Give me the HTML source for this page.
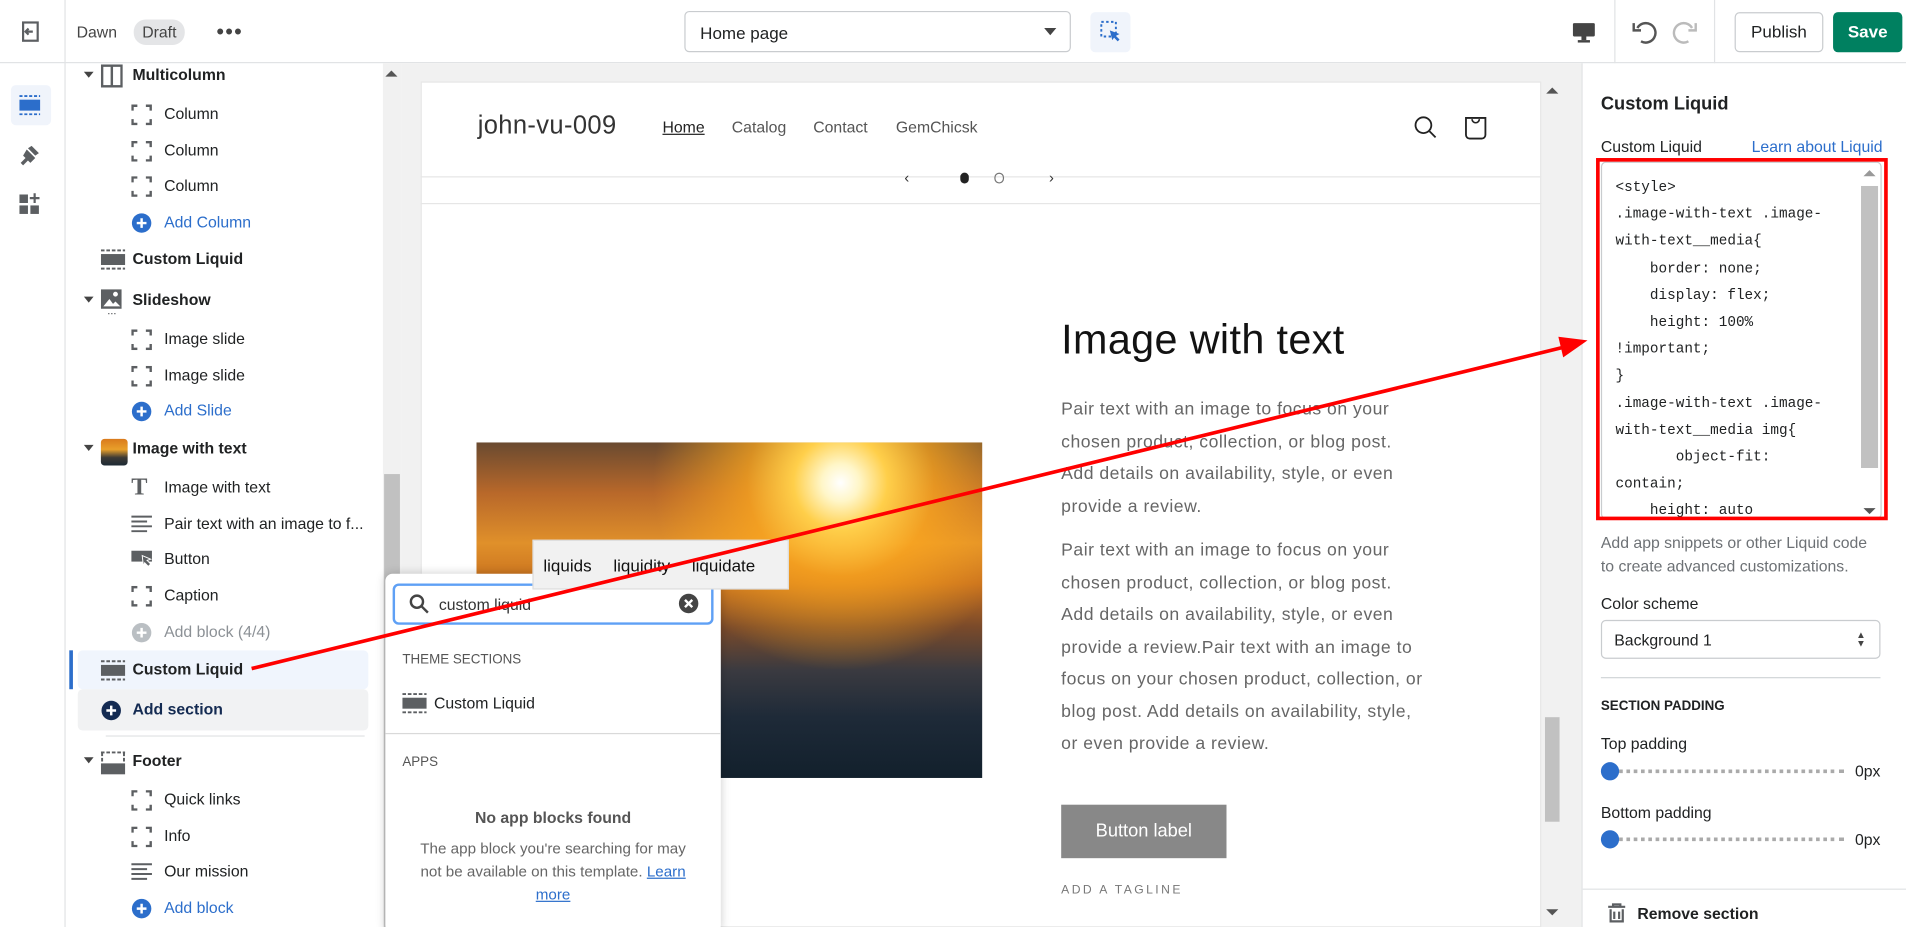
<!DOCTYPE html>
<html><head><meta charset="utf-8"><style>
*{box-sizing:border-box;margin:0;padding:0}
html,body{width:1906px;height:927px;overflow:hidden;background:#fff;font-family:"Liberation Sans",sans-serif;color:#202223}
#w{position:absolute;left:0;top:0;width:1568px;height:763px;transform:scale(1.21556);transform-origin:0 0;overflow:hidden}
.a{position:absolute}
.t{font-size:13px;white-space:nowrap}
.blue{color:#2c6ecb}
</style></head><body><div id="w">
<!-- top bar -->
<div class="a" style="left:0;top:0;width:1568px;height:52px;border-bottom:1px solid #e1e3e5;background:#fff"></div>
<div class="a" style="left:53px;top:0;width:1px;height:763px;background:#e1e3e5"></div>
<svg class="a" style="left:16px;top:17px" width="18" height="18" viewBox="0 0 18 18"><rect x="3" y="1.5" width="12" height="15" fill="none" stroke="#5c5f62" stroke-width="1.8"/><path d="M11 9H5M7.5 6.5L5 9l2.5 2.5" stroke="#5c5f62" stroke-width="1.8" fill="none"/></svg>
<div class="a t" style="left:63px;top:19px;color:#444">Dawn</div>
<div class="a t" style="left:110px;top:16px;background:#e4e5e7;border-radius:10px;padding:3px 7px;color:#444">Draft</div>
<div class="a" style="left:178px;top:16px;font-size:18px;color:#444;letter-spacing:1px">•••</div>
<div class="a" style="left:563px;top:9px;width:318px;height:34px;border:1px solid #c9cccf;border-radius:4px"></div>
<div class="a t" style="left:576px;top:19px;font-size:14px">Home page</div>
<div class="a" style="left:859px;top:23px;border:5px solid transparent;border-top:6px solid #444"></div>
<div class="a" style="left:897px;top:10px;width:33px;height:33px;background:#f0f4fb;border-radius:4px"></div>
<svg class="a" style="left:904px;top:16px" width="20" height="20" viewBox="0 0 20 20"><rect x="2" y="2" width="12" height="12" fill="none" stroke="#2c6ecb" stroke-width="1.6" stroke-dasharray="2 2"/><path d="M9 9l8 3-3 1.5 3 3-1.5 1.5-3-3L11 17z" fill="#2c6ecb"/></svg>
<svg class="a" style="left:1293px;top:16px" width="20" height="20" viewBox="0 0 20 20"><rect x="1" y="3" width="18" height="11" rx="1" fill="#444"/><rect x="8" y="14" width="4" height="3" fill="#444"/><rect x="5" y="17" width="10" height="2" fill="#444"/></svg>
<div class="a" style="left:1328px;top:0;width:1px;height:52px;background:#e1e3e5"></div>
<div class="a" style="left:1410px;top:0;width:1px;height:52px;background:#e1e3e5"></div>
<svg class="a" style="left:1341px;top:14px" width="24" height="24" viewBox="0 0 24 24"><path d="M6 9a8 8 0 1 1 3 11" fill="none" stroke="#555" stroke-width="2"/><path d="M3 5v6h6" fill="none" stroke="#555" stroke-width="2"/></svg>
<svg class="a" style="left:1374px;top:14px" width="24" height="24" viewBox="0 0 24 24"><path d="M18 9a8 8 0 1 0-3 11" fill="none" stroke="#bbb" stroke-width="2"/><path d="M21 5v6h-6" fill="none" stroke="#bbb" stroke-width="2"/></svg>
<div class="a" style="left:1427px;top:10px;width:73px;height:33px;border:1px solid #c9cccf;border-radius:4px;font-size:14px;text-align:center;line-height:31px">Publish</div>
<div class="a" style="left:1508px;top:10px;width:57px;height:33px;background:#008060;border-radius:4px;color:#fff;font-size:14px;font-weight:bold;text-align:center;line-height:33px">Save</div>
<!-- left rail -->
<div class="a" style="left:9px;top:70px;width:33px;height:33px;background:#f0f4fb;border-radius:4px"></div>
<svg class="a" style="left:15px;top:77px" width="20" height="20" viewBox="0 0 20 20"><rect x="1" y="5" width="17" height="9" fill="#2c6ecb"/><path d="M1 2h17M1 17h17" stroke="#2c6ecb" stroke-width="1.5" stroke-dasharray="2.5 1.5"/></svg>
<svg class="a" style="left:15px;top:118px" width="20" height="20" viewBox="0 0 20 20"><path d="M11 2l6 6-3 2-6-6zM7 5l7 7-4 4-2-2-4 4-2-2 4-4-2-2z" fill="#5c5f62"/></svg>
<svg class="a" style="left:15px;top:158px" width="20" height="20" viewBox="0 0 20 20"><rect x="1" y="2" width="7" height="7" fill="#5c5f62"/><rect x="1" y="11" width="7" height="7" fill="#5c5f62"/><rect x="10" y="11" width="7" height="7" fill="#5c5f62"/><path d="M13.5 1v8M9.5 5h8" stroke="#5c5f62" stroke-width="1.8"/></svg>
<!-- sidebar -->
<div class="a" style="left:315px;top:52px;width:15px;height:711px;background:#f1f1f1"></div>
<div class="a" style="left:316px;top:390px;width:13px;height:373px;background:#c1c1c1"></div>
<div class="a" style="left:317px;top:58px;border:5px solid transparent;border-bottom:5px solid #555;border-top:0"></div>
<div class="a" style="left:57px;top:535px;width:3px;height:32px;background:#2c6ecb"></div>
<div class="a" style="left:64px;top:535px;width:239px;height:32px;background:#f0f5fd;border-radius:4px"></div>
<div class="a" style="left:64px;top:567px;width:239px;height:34px;background:#f1f2f3;border-radius:4px"></div>
<div class="a" style="left:87px;top:605px;width:213px;height:1px;background:#e1e3e5"></div>
<div id="side"></div>
<script>
var it=[
[62,'Multicolumn',1,'col',0],[94,'Column',0,'b',0],[124,'Column',0,'b',0],[153,'Column',0,'b',0],[183,'Add Column',0,'add',0],
[213,'Custom Liquid',1,'sec',0],[247,'Slideshow',1,'img',0],[279,'Image slide',0,'b',0],[309,'Image slide',0,'b',0],[338,'Add Slide',0,'add',0],
[369,'Image with text',1,'pic',0],[401,'Image with text',0,'T',0],[431,'Pair text with an image to f...',0,'lines',0],[460,'Button',0,'btn',0],[490,'Caption',0,'b',0],[520,'Add block (4/4)',0,'addg',0],
[551,'Custom Liquid',1,'sec',0],[584,'Add section',1,'adds',0],[626,'Footer',1,'foot',0],[658,'Quick links',0,'b',0],[688,'Info',0,'b',0],[717,'Our mission',0,'lines',0],[747,'Add block',0,'add',0]];
var h='';
it.forEach(function(r){var y=r[0],top=r[2],k=r[3];var ix=top?83:108,tx=top?109:135;var col='#202223';var ic='';
if(k=='b')ic='<svg class="a" style="left:'+ix+'px;top:'+(y-8)+'px" width="17" height="17" viewBox="0 0 17 17"><path d="M1 5V1h4M12 1h4v4M16 12v4h-4M5 16H1v-4" fill="none" stroke="#5c5f62" stroke-width="2"/></svg>';
if(k=='add'||k=='addg'||k=='adds'){var c=k=='add'?'#2c6ecb':k=='addg'?'#babfc3':'#142b52';if(k=='add')col='#2c6ecb';if(k=='addg')col='#8c9196';if(k=='adds')col='#142b52';ic='<svg class="a" style="left:'+ix+'px;top:'+(y-8)+'px" width="17" height="17" viewBox="0 0 17 17"><circle cx="8.5" cy="8.5" r="8" fill="'+c+'"/><path d="M8.5 4.5v8M4.5 8.5h8" stroke="#fff" stroke-width="2"/></svg>';}
if(k=='sec')ic='<svg class="a" style="left:'+ix+'px;top:'+(y-8)+'px" width="20" height="17" viewBox="0 0 20 17"><rect x="0" y="4" width="20" height="9" fill="#5c5f62"/><path d="M0 1h20M0 16h20" stroke="#5c5f62" stroke-width="1.6" stroke-dasharray="3 1.5"/></svg>';
if(k=='foot')ic='<svg class="a" style="left:'+ix+'px;top:'+(y-8)+'px" width="20" height="20" viewBox="0 0 20 20"><rect x="0" y="10" width="20" height="9" fill="#5c5f62"/><path d="M0 1h20M1 1v8M19 1v8" stroke="#5c5f62" stroke-width="1.6" stroke-dasharray="3 1.5"/></svg>';
if(k=='col')ic='<svg class="a" style="left:'+ix+'px;top:'+(y-9)+'px" width="18" height="19" viewBox="0 0 18 19"><rect x="1" y="1" width="16" height="17" fill="none" stroke="#5c5f62" stroke-width="2"/><path d="M9 1v17" stroke="#5c5f62" stroke-width="2"/></svg>';
if(k=='img')ic='<svg class="a" style="left:'+ix+'px;top:'+(y-9)+'px" width="18" height="22" viewBox="0 0 18 22"><rect x="0" y="0" width="17" height="16" fill="#5c5f62"/><path d="M2 14l5-6 3 4 2-2 4 4z" fill="#fff"/><circle cx="12" cy="4" r="2" fill="#fff"/><path d="M6 20h6" stroke="#5c5f62" stroke-dasharray="1 1.5"/></svg>';
if(k=='pic')ic='<div class="a" style="left:'+ix+'px;top:'+(y-8)+'px;width:22px;height:22px;border-radius:3px;background:linear-gradient(#d97a1c,#e9a02a 40%,#3d3a36 70%,#1d2a35)"></div>';
if(k=='T')ic='<div class="a" style="left:'+ix+'px;top:'+(y-11)+'px;font:bold 20px Liberation Serif,serif;color:#5c5f62">T</div>';
if(k=='lines')ic='<svg class="a" style="left:'+ix+'px;top:'+(y-7)+'px" width="18" height="15" viewBox="0 0 18 15"><path d="M0 1h17M0 5h13M0 9h17M0 13h13" stroke="#5c5f62" stroke-width="1.6"/></svg>';
if(k=='btn')ic='<svg class="a" style="left:'+ix+'px;top:'+(y-7)+'px" width="18" height="17" viewBox="0 0 18 17"><rect x="0" y="0" width="17" height="9" fill="#5c5f62"/><path d="M9 4l7 3-3 1 3 3-2 2-3-3-1 3z" fill="#5c5f62" stroke="#fff" stroke-width=".8"/></svg>';
if(top&&k!='sec'&&k!='adds')h+='<div class="a" style="left:69px;top:'+(y-3)+'px;border:4.5px solid transparent;border-top:5px solid #444;border-bottom:0"></div>';
h+=ic+'<div class="a t" style="left:'+tx+'px;top:'+(y-8)+'px;color:'+col+';'+(top?'font-weight:bold;':'')+'">'+r[1]+'</div>';});
document.getElementById('side').outerHTML=h;
</script>
<!-- preview -->
<div class="a" style="left:330px;top:52px;width:971px;height:711px;background:#f1f1f1"></div>
<div class="a" style="left:346px;top:67px;width:922px;height:696px;background:#fff;border:1px solid #e6e6e6"></div>
<div class="a" style="left:346px;top:145px;width:922px;height:1px;background:#e6e6e6"></div>
<div class="a" style="left:346px;top:167px;width:922px;height:1px;background:#e6e6e6"></div>
<div class="a" style="left:1269px;top:67px;width:16px;height:696px;background:#f1f1f1"></div>
<div class="a" style="left:1271px;top:590px;width:12px;height:86px;background:#c1c1c1"></div>
<div class="a" style="left:1272px;top:72px;border:5px solid transparent;border-bottom:5px solid #555;border-top:0"></div>
<div class="a" style="left:1272px;top:748px;border:5px solid transparent;border-top:5px solid #555;border-bottom:0"></div>
<div class="a" style="left:393px;top:92px;font-size:21px;color:#333;letter-spacing:.3px">john-vu-009</div>
<div class="a t" style="left:545px;top:97px;color:#222;text-decoration:underline">Home</div>
<div class="a t" style="left:602px;top:97px;color:#555">Catalog</div>
<div class="a t" style="left:669px;top:97px;color:#555">Contact</div>
<div class="a t" style="left:737px;top:97px;color:#555">GemChicsk</div>
<svg class="a" style="left:1163px;top:95px" width="20" height="20" viewBox="0 0 20 20"><circle cx="8" cy="8" r="6.5" fill="none" stroke="#222" stroke-width="1.5"/><path d="M13 13l5 5" stroke="#222" stroke-width="1.5"/></svg>
<svg class="a" style="left:1204px;top:94px" width="20" height="22" viewBox="0 0 20 22"><path d="M2 3h16v14a3 3 0 0 1-3 3H5a3 3 0 0 1-3-3z" fill="none" stroke="#222" stroke-width="1.5"/><path d="M7 4a3 3 0 0 0 6 0" fill="none" stroke="#222" stroke-width="1.3"/></svg>
<div class="a" style="left:744px;top:139px;font-size:12px;color:#333">‹</div>
<div class="a" style="left:790px;top:142px;width:7px;height:9px;border-radius:4px;background:#222"></div>
<div class="a" style="left:818px;top:142px;width:8px;height:9px;border-radius:4px;border:1px solid #777"></div>
<div class="a" style="left:863px;top:139px;font-size:12px;color:#333">›</div>
<div class="a" style="left:392px;top:364px;width:416px;height:276px;background:radial-gradient(circle at 72% 12%,#fff 0,#fff6c8 4%,#ffcf4a 10%,rgba(255,170,30,.7) 20%,rgba(0,0,0,0) 40%),linear-gradient(180deg,#6a4a30 0%,#b8682a 15%,#e0902a 30%,#c8701e 42%,#7a4a2a 55%,#3a3a40 68%,#1e2a38 82%,#12202c 100%)"></div>
<div class="a" style="left:873px;top:261px;font-size:34px;color:#121212;letter-spacing:.3px">Image with text</div>
<div class="a" style="left:873px;top:324px;width:288px;font-size:14.5px;line-height:26.5px;color:#666;letter-spacing:.4px">Pair text with an image to focus on your chosen product, collection, or blog post. Add details on availability, style, or even provide a review.</div>
<div class="a" style="left:873px;top:440px;width:298px;font-size:14.5px;line-height:26.5px;color:#666;letter-spacing:.4px">Pair text with an image to focus on your chosen product, collection, or blog post. Add details on availability, style, or even provide a review.Pair text with an image to focus on your chosen product, collection, or blog post. Add details on availability, style, or even provide a review.</div>
<div class="a" style="left:873px;top:662px;width:136px;height:44px;background:#888;color:#fff;font-size:15px;text-align:center;line-height:44px">Button label</div>
<div class="a" style="left:873px;top:727px;font-size:10px;color:#777;letter-spacing:2px">ADD A TAGLINE</div>
<!-- popup -->
<div class="a" style="left:317px;top:472px;width:276px;height:295px;background:#fff;border-radius:6px;box-shadow:0 0 8px rgba(0,0,0,.2)"></div>
<div class="a" style="left:323px;top:480px;width:264px;height:34px;border:2px solid #5fa0f5;border-radius:5px"></div>
<svg class="a" style="left:336px;top:488px" width="17" height="17" viewBox="0 0 17 17"><circle cx="7" cy="7" r="5" fill="none" stroke="#444" stroke-width="2"/><path d="M11 11l5 5" stroke="#444" stroke-width="2"/></svg>
<div class="a t" style="left:361px;top:490px;color:#333">custom liquid</div>
<svg class="a" style="left:558px;top:488px" width="17" height="17" viewBox="0 0 17 17"><circle cx="8.5" cy="8.5" r="8" fill="#444"/><path d="M5.5 5.5l6 6M11.5 5.5l-6 6" stroke="#fff" stroke-width="2"/></svg>
<div class="a" style="left:331px;top:537px;font-size:11px;color:#555">THEME SECTIONS</div>
<svg class="a" style="left:331px;top:570px" width="20" height="17" viewBox="0 0 20 17"><rect x="0" y="4" width="20" height="9" fill="#5c5f62"/><path d="M0 1h20M0 16h20" stroke="#5c5f62" stroke-width="1.6" stroke-dasharray="3 1.5"/></svg>
<div class="a t" style="left:357px;top:571px">Custom Liquid</div>
<div class="a" style="left:317px;top:603px;width:276px;height:1px;background:#d9d9d9"></div>
<div class="a" style="left:331px;top:621px;font-size:11px;color:#555">APPS</div>
<div class="a t" style="left:317px;top:665px;width:276px;text-align:center;font-weight:bold;color:#555">No app blocks found</div>
<div class="a" style="left:337px;top:689px;width:236px;font-size:12.5px;line-height:19px;text-align:center;color:#666">The app block you're searching for may not be available on this template. <span class="blue" style="text-decoration:underline">Learn more</span></div>
<div class="a" style="left:438px;top:444px;width:211px;height:41px;background:#f1f1f1;border:1px solid #ddd"></div>
<div class="a" style="left:447px;top:457px;font-size:14px;color:#111;word-spacing:14px">liquids liquidity liquidate</div>
<!-- right panel -->
<div class="a" style="left:1301px;top:52px;width:1px;height:711px;background:#e1e3e5"></div>
<div class="a" style="left:1317px;top:77px;font-size:15px;font-weight:bold">Custom Liquid</div>
<div class="a t" style="left:1317px;top:113px">Custom Liquid</div>
<div class="a t blue" style="left:1441px;top:113px">Learn about Liquid</div>
<div class="a" style="left:1317px;top:133px;width:231px;height:294px;border:1px solid #c9cccf;border-radius:4px;overflow:hidden">
<pre class="a" style="left:11px;top:9px;font:11.8px/22.2px 'Liberation Mono','DejaVu Sans Mono',monospace;color:#202223">&lt;style&gt;
.image-with-text .image-
with-text__media{
    border: none;
    display: flex;
    height: 100%
!important;
}
.image-with-text .image-
with-text__media img{
       object-fit:
contain;
    height: auto</pre>
</div>
<div class="a" style="left:1531px;top:153px;width:14px;height:232px;background:#c1c1c1"></div>
<div class="a" style="left:1533px;top:140px;border:5px solid transparent;border-bottom:5px solid #999;border-top:0"></div>
<div class="a" style="left:1533px;top:418px;border:5px solid transparent;border-top:5px solid #555;border-bottom:0"></div>
<div class="a" style="left:1313px;top:130px;width:240px;height:298px;border:3px solid #f00"></div>
<div class="a" style="left:1317px;top:437px;font-size:13px;line-height:19px;color:#6d7175">Add app snippets or other Liquid code<br>to create advanced customizations.</div>
<div class="a t" style="left:1317px;top:489px">Color scheme</div>
<div class="a" style="left:1317px;top:510px;width:230px;height:32px;border:1px solid #c9cccf;border-radius:4px"></div>
<div class="a t" style="left:1328px;top:519px">Background 1</div>
<div class="a" style="left:1527px;top:519px;font-size:8px;line-height:7px;color:#444">▲<br>▼</div>
<div class="a" style="left:1317px;top:557px;width:230px;height:1px;background:#d2d5d8"></div>
<div class="a" style="left:1317px;top:575px;font-size:11px;font-weight:bold">SECTION PADDING</div>
<div class="a t" style="left:1317px;top:604px">Top padding</div>
<div class="a t" style="left:1317px;top:661px">Bottom padding</div>
<div class="a" style="left:1325px;top:633px;width:192px;height:3px;border-top:3px dotted #aaa"></div>
<div class="a" style="left:1325px;top:689px;width:192px;height:3px;border-top:3px dotted #aaa"></div>
<div class="a" style="left:1317px;top:627px;width:15px;height:15px;border-radius:50%;background:#2c6ecb"></div>
<div class="a" style="left:1317px;top:683px;width:15px;height:15px;border-radius:50%;background:#2c6ecb"></div>
<div class="a t" style="left:1526px;top:627px">0px</div>
<div class="a t" style="left:1526px;top:683px">0px</div>
<div class="a" style="left:1302px;top:731px;width:266px;height:1px;background:#e1e3e5"></div>
<svg class="a" style="left:1322px;top:743px" width="16" height="16" viewBox="0 0 16 16"><path d="M1 3h14M5 3V1h6v2M3 5v10h10V5M6 7v6M10 7v6" fill="none" stroke="#5c5f62" stroke-width="1.8"/></svg>
<div class="a t" style="left:1347px;top:744px;font-weight:bold">Remove section</div>
<!-- arrow -->
<svg class="a" style="left:0;top:0" width="1568" height="763"><line x1="207" y1="550" x2="1285" y2="286" stroke="#f00" stroke-width="3"/><path d="M1306 280l-24 -3 4 17z" fill="#f00"/></svg>
</div></body></html>
